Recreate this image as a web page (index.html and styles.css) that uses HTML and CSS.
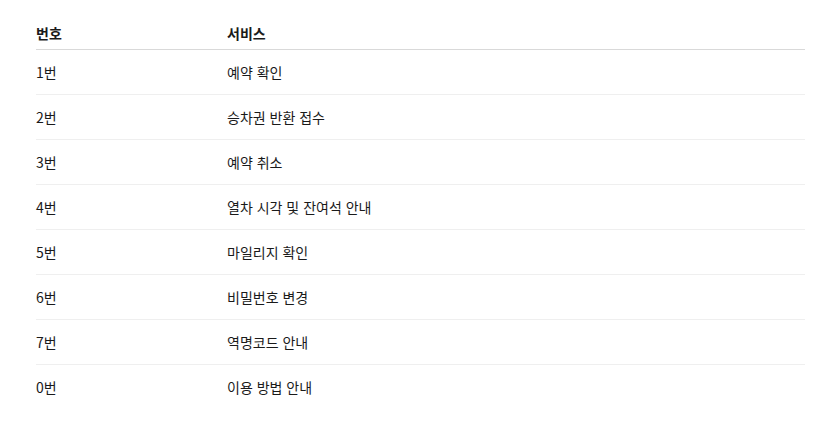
FILE: index.html
```html
<!DOCTYPE html>
<html lang="ko">
<head>
<meta charset="utf-8">
<link rel="stylesheet" href="styles.css">
</head>
<body>
<div class="wrap">
<table class="svc">
<thead>
<tr><th class="num">번호</th><th>서비스</th></tr>
</thead>
<tbody>
<tr><td class="num">1번</td><td>예약 확인</td></tr>
<tr><td class="num">2번</td><td>승차권 반환 접수</td></tr>
<tr><td class="num">3번</td><td>예약 취소</td></tr>
<tr><td class="num">4번</td><td>열차 시각 및 잔여석 안내</td></tr>
<tr><td class="num">5번</td><td>마일리지 확인</td></tr>
<tr><td class="num">6번</td><td>비밀번호 변경</td></tr>
<tr><td class="num">7번</td><td>역명코드 안내</td></tr>
<tr><td class="num">0번</td><td>이용 방법 안내</td></tr>
</tbody>
</table>
</div>
</body>
</html>
```
FILE: styles.css
```css
html, body {
  margin: 0;
  padding: 0;
  background: #fff;
}
body {
  font-family: "Noto Sans CJK KR", "Noto Sans", sans-serif;
  font-size: 14px;
  color: #1a1a1a;
}
.wrap {
  padding: 18px 28px 0 36px;
}
.svc {
  width: 769px;
  border-collapse: collapse;
  table-layout: fixed;
}
.svc th, .svc td {
  text-align: left;
  padding: 0;
  line-height: 20px;
}
.svc th {
  font-weight: 700;
  padding: 5px 0 6px 0;
  border-bottom: 1px solid #d9d9d9;
}
.svc td {
  padding: 12px 0 12px 0;
  border-bottom: 1px solid #efefef;
}
.svc tbody tr:last-child td {
  border-bottom: none;
}
.svc .num {
  width: 191px;
}
```
